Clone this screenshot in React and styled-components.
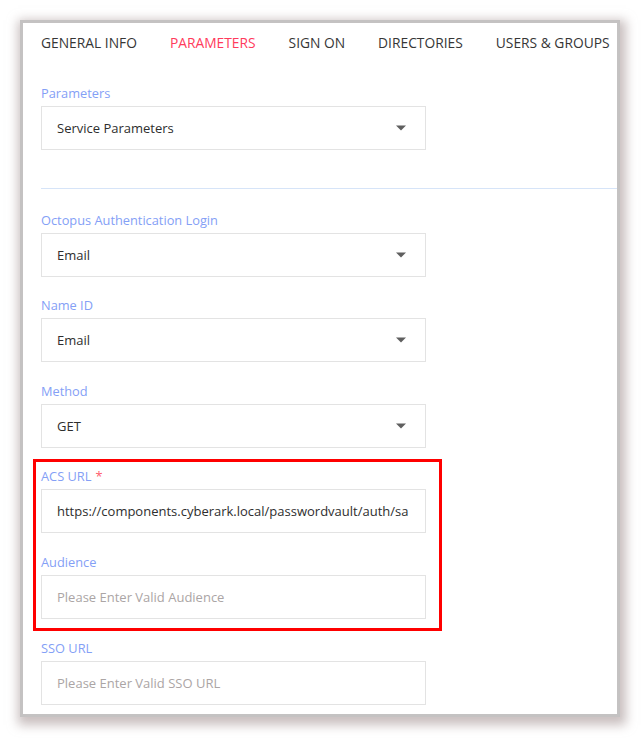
import React from "react";
import styled, { createGlobalStyle } from "styled-components";

const GlobalStyle = createGlobalStyle`
  html, body {
    margin: 0;
    padding: 0;
    background: #ffffff;
  }
  body {
    font-family: "Open Sans", "Noto Sans", Arial, sans-serif;
    color: #333333;
  }
  * { box-sizing: border-box; }
`;

const Page = styled.div`
  width: 642px;
  height: 738px;
  padding: 20px 22px 21px 20px;
  background: #ffffff;
`;

const Panel = styled.div`
  width: 600px;
  height: 697px;
  border: 3px solid #c4c2c2;
  background: #ffffff;
  box-shadow: 2px 4px 10px 4px rgba(165, 148, 148, 0.6);
  overflow: hidden;
  display: flex;
  flex-direction: column;
`;

const Tabs = styled.nav`
  display: flex;
  gap: 33px;
  padding: 10px 0 0 18px;
  height: 60px;
  flex: none;
`;

const Tab = styled.span`
  font-size: 13.8px;
  line-height: 20px;
  white-space: nowrap;
  color: ${(p) => (p.$active ? "#ff3b5c" : "#363636")};
`;

const Form = styled.div`
  display: flex;
  flex-direction: column;
  gap: 18.6px;
  padding-left: 18px;
`;

const Field = styled.div`
  display: flex;
  flex-direction: column;
  width: 385px;
`;

const Label = styled.label`
  font-size: 12.8px;
  line-height: 18px;
  margin-top: 1px;
  margin-bottom: 4px;
  color: #84a0f6;
`;

const Required = styled.span`
  color: #ff5c6c;
  margin-left: 4px;
`;

const Box = styled.div`
  height: 44px;
  border: 1.5px solid #e3e3e3;
  background: #ffffff;
  display: flex;
  align-items: center;
  padding: 0 14px 0 15px;
  overflow: hidden;
`;

const Value = styled.span`
  flex: 1;
  min-width: 0;
  overflow: hidden;
  white-space: nowrap;
  font-size: 13px;
  color: ${(p) => (p.$placeholder ? "#aba5a5" : "#2e2e2e")};
`;

const Caret = styled.svg`
  flex: none;
  width: 10px;
  height: 6px;
  margin-right: 5px;
  fill: #5f5f5f;
`;

const Divider = styled.hr`
  border: none;
  height: 1.5px;
  background: #d6e4f8;
  margin: 19px 0 2px 0;
`;

const Highlight = styled.div`
  position: relative;
  display: flex;
  flex-direction: column;
  gap: 18.6px;
  width: 385px;

  &::after {
    content: "";
    position: absolute;
    top: -7px;
    left: -8px;
    right: -16px;
    bottom: -12px;
    border: 3px solid #ff0000;
    pointer-events: none;
  }
`;

const SelectField = ({ label, value }) => (
  <Field>
    <Label>{label}</Label>
    <Box>
      <Value>{value}</Value>
      <Caret viewBox="0 0 10 6">
        <path d="M0 0.5h10L5 5.5z" />
      </Caret>
    </Box>
  </Field>
);

const TextField = ({ label, value, placeholder, required }) => (
  <Field>
    <Label>
      {label}
      {required && <Required>*</Required>}
    </Label>
    <Box>
      <Value $placeholder={!value}>{value || placeholder}</Value>
    </Box>
  </Field>
);

const tabs = ["GENERAL INFO", "PARAMETERS", "SIGN ON", "DIRECTORIES", "USERS & GROUPS"];

export default function App() {
  return (
    <>
      <GlobalStyle />
      <Page>
        <Panel>
          <Tabs>
            {tabs.map((t) => (
              <Tab key={t} $active={t === "PARAMETERS"}>
                {t}
              </Tab>
            ))}
          </Tabs>
          <Form>
            <SelectField label="Parameters" value="Service Parameters" />
            <Divider />
            <SelectField label="Octopus Authentication Login" value="Email" />
            <SelectField label="Name ID" value="Email" />
            <SelectField label="Method" value="GET" />
            <Highlight>
              <TextField
                label="ACS URL"
                required
                value="https://components.cyberark.local/passwordvault/auth/sa"
              />
              <TextField label="Audience" placeholder="Please Enter Valid Audience" />
            </Highlight>
            <TextField label="SSO URL" placeholder="Please Enter Valid SSO URL" />
          </Form>
        </Panel>
      </Page>
    </>
  );
}
